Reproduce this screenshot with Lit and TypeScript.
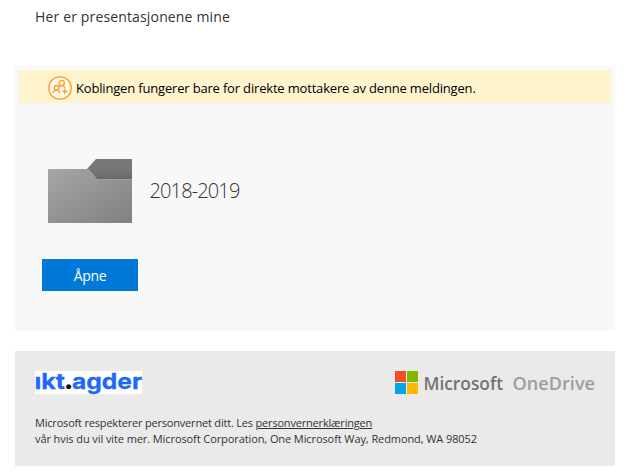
import { LitElement, html, css } from "lit";
import { customElement } from "lit/decorators.js";

@customElement("app-root")
export class AppRoot extends LitElement {
  static styles = css`
    :host {
      display: block;
      box-sizing: border-box;
      width: 627px;
      height: 476px;
      padding: 0 12px 0 15px;
      overflow: hidden;
      background: #fff;
      color: #333;
      font-family: "Open Sans", "Noto Sans", sans-serif;
    }
    svg { display: block; flex: none; overflow: visible; }
    .message {
      height: 66px;
      padding: 7px 20px 0;
      box-sizing: border-box;
      font-size: 14px;
      line-height: 20px;
      letter-spacing: 0.15px;
      white-space: nowrap;
    }
    .card {
      box-sizing: border-box;
      height: 265px;
      padding: 4px;
      background: #f8f8f8;
    }
    .notice {
      display: flex;
      align-items: center;
      gap: 4px;
      height: 33px;
      padding: 0 0 0 29px;
      background: #fff4ce;
      color: #000;
      font-size: 13px;
      letter-spacing: -0.175px;
      white-space: nowrap;
    }
    .notice svg { margin-top: 3px; }
    .notice span { padding-top: 2px; }
    .folder {
      display: flex;
      align-items: center;
      gap: 17.5px;
      margin: 55px 0 0 29px;
      height: 65px;
    }
    .name {
      font-size: 20px;
      font-weight: 300;
      line-height: 28px;
      letter-spacing: -0.87px;
    }
    .open {
      display: block;
      width: 96px;
      height: 32px;
      margin: 36px 0 0 23px;
      padding: 2px 0 0;
      border: 0;
      background: #0078d7;
      color: #fff;
      font: 14px/20px "Open Sans", "Noto Sans", sans-serif;
      letter-spacing: -0.3px;
    }
    footer {
      box-sizing: border-box;
      height: 115px;
      margin-top: 20px;
      padding: 20px 20px 0;
      background: #eaeaea;
    }
    .brands {
      display: flex;
      justify-content: space-between;
      height: 44px;
    }
    .legal {
      margin: 0;
      font-size: 11px;
      line-height: 16px;
      letter-spacing: -0.09px;
      white-space: nowrap;
    }
    .tight { letter-spacing: -0.19px; }
    .tight a { color: inherit; text-decoration: underline; }
    .agder { font: 700 22px "Inter", sans-serif; fill: #2068fa; stroke: #2068fa; stroke-width: 0.3px; }
    .dot { font: 800 25px "Open Sans", sans-serif; fill: #111; }
    .ms { font: 600 18.5px "Open Sans", sans-serif; fill: #737373; }
    .od { font: 600 18.5px "Open Sans", sans-serif; fill: #a19d9b; }
  `;

  render() {
    return html`
      <div class="message">Her er presentasjonene mine</div>
      <section class="card">
        <div class="notice">
          <svg width="24" height="24" viewBox="0 0 24 24" fill="none" stroke="#fba02e" stroke-width="1.3">
            <circle cx="12" cy="12" r="11.2" fill="#fff8ea" />
            <circle cx="13.7" cy="7" r="2.6" />
            <circle cx="8.5" cy="11.8" r="2.3" />
            <path d="M5.2 17.6c0-2 1.3-3.5 3.3-3.5s3.2 1.5 3.2 3.5M11.2 11.4c.5-1.1 1.3-1.8 2.5-1.8 1.8 0 2.9 1.1 3.2 2.9M16.8 13v5M14.3 15.5h5" />
          </svg>
          <span>Koblingen fungerer bare for direkte mottakere av denne meldingen.</span>
        </div>
        <div class="folder">
          <svg width="84" height="65" viewBox="0 0 84 65">
            <defs>
              <linearGradient id="front" x1="0" y1="0" x2="1" y2="1">
                <stop offset="0" stop-color="#a6a6a6" />
                <stop offset="1" stop-color="#808080" />
              </linearGradient>
              <linearGradient id="tab" x1="0" y1="0" x2="0" y2="1">
                <stop offset="0" stop-color="#787878" />
                <stop offset="0.65" stop-color="#747474" />
                <stop offset="1" stop-color="#666" />
              </linearGradient>
            </defs>
            <path d="M48 1H84V22H48L39 11Z" fill="url(#tab)" />
            <path d="M0 11H40L49 21H84V65H0Z" fill="url(#front)" />
            <path d="M40 11L49 21.5H84" fill="none" stroke="#a0a0a0" stroke-width="1" />
          </svg>
          <span class="name">2018-2019</span>
        </div>
        <button class="open">Åpne</button>
      </section>
      <footer>
        <div class="brands">
          <svg width="107" height="23" viewBox="0 0 107 23">
            <rect width="107" height="23" fill="#fff" />
            <text class="agder" x="-0.5" y="18.3" textLength="30.5" lengthAdjust="spacingAndGlyphs">ıkt</text>
            <text class="dot" x="30" y="18.3">.</text>
            <text class="agder" x="37" y="18.3" textLength="70" lengthAdjust="spacingAndGlyphs">agder</text>
          </svg>
          <svg width="201" height="24" viewBox="0 0 201 24">
            <path d="M1 0H12V11H1Z" fill="#f25022" />
            <path d="M13 0H24V11H13Z" fill="#7fba00" />
            <path d="M1 12H12V23H1Z" fill="#00a4ef" />
            <path d="M13 12H24V23H13Z" fill="#ffb900" />
            <text class="ms" x="29.5" y="19" textLength="79.5" lengthAdjust="spacingAndGlyphs">Microsoft</text>
            <text class="od" x="118.5" y="19" textLength="82.5" lengthAdjust="spacingAndGlyphs">OneDrive</text>
          </svg>
        </div>
        <p class="legal">
          <span class="tight">Microsoft respekterer personvernet ditt. Les <a>personvernerklæringen</a></span><br />
          vår hvis du vil vite mer. Microsoft Corporation, One Microsoft Way, Redmond, WA 98052
        </p>
      </footer>
    `;
  }
}
